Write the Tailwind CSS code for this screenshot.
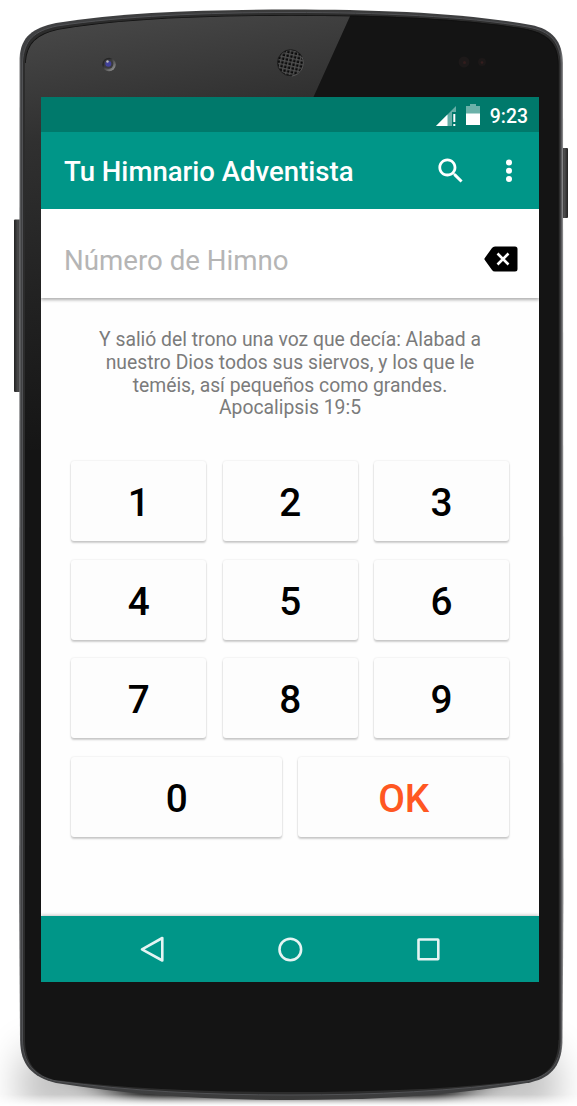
<!DOCTYPE html>
<html lang="es">
<head>
<meta charset="utf-8">
<title>Tu Himnario Adventista</title>
<script src="https://cdn.jsdelivr.net/npm/@tailwindcss/browser@4"></script>
</head>
<body class="bg-white overflow-hidden">
<div class="relative isolate w-[577px] h-[1106px] overflow-hidden pt-[97px] pl-[41px] font-[Roboto,sans-serif]">
  <!-- Device body -->
  <svg class="absolute inset-0 -z-10" width="577" height="1106" viewBox="0 0 577 1106" aria-hidden="true">
    <defs>
      <linearGradient id="rim" x1="0" x2="1"><stop offset="0" stop-color="#8a8b8d"/><stop offset=".004" stop-color="#404143"/><stop offset=".5" stop-color="#3b3b3b"/><stop offset=".993" stop-color="#404143"/><stop offset="1" stop-color="#9b9b9d"/></linearGradient>
      <linearGradient id="glare" gradientUnits="userSpaceOnUse" x1="120" y1="20" x2="190" y2="440"><stop offset="0" stop-color="#464646"/><stop offset=".25" stop-color="#303030"/><stop offset=".6" stop-color="#222"/><stop offset="1" stop-color="#141414"/></linearGradient>
      <linearGradient id="key" x1="0" x2="1"><stop offset="0" stop-color="#222"/><stop offset=".5" stop-color="#4b4b4c"/><stop offset="1" stop-color="#222"/></linearGradient>
      <linearGradient id="ring" x1="0" y1="0" x2="1" y2="1"><stop offset=".3" stop-color="#262626"/><stop offset="1" stop-color="#a6a6a6"/></linearGradient>
      <pattern id="mesh" width="3.800" height="3.800" patternUnits="userSpaceOnUse" patternTransform="translate(288.5 62) rotate(12)"><rect width="4" height="4" fill="#505050"/><rect x=".4" y=".4" width="2.500" height="2.500" fill="#0b0b0b"/></pattern>
      <filter id="soft" x="-20%" y="-100%" width="140%" height="300%"><feGaussianBlur stdDeviation="22 4"/></filter>
      <filter id="wide" x="-20%" y="-200%" width="140%" height="500%"><feGaussianBlur stdDeviation="18 22"/></filter>
      <clipPath id="face"><path d="M25 63C26 43 36 34 58 29C120 18 205 15 290 15C375 15 463 18 526 29C549 34 558 44 558.500 64V1040C558 1064 548 1076 527 1080C455 1089 375 1092 290 1092C205 1092 130 1089 56 1080C35 1076 25 1062 25 1039Z"/></clipPath>
      <linearGradient id="fade" x1="0" y1="0" x2="0" y2="1"><stop offset=".91" stop-color="#fff"/><stop offset="1" stop-color="#000"/></linearGradient>
      <mask id="ground" maskUnits="userSpaceOnUse" x="0" y="980" width="577" height="126"><rect y="980" width="577" height="126" fill="url(#fade)"/></mask>
    </defs>
    <g mask="url(#ground)">
      <rect x="20" y="1056" width="537" height="55" fill="#000" opacity=".28" filter="url(#wide)"/>
      <path d="M90 1076H487L450 1101H130Z" fill="#000" opacity=".85" filter="url(#soft)"/>
    </g>
    <rect x="14" y="219.500" width="8" height="172.500" rx="1" fill="url(#key)"/>
    <rect x="561" y="148" width="7" height="70" rx="1" fill="url(#key)"/>
    <path d="M19.500 58C21 36 33 28 56 23C125 12 205 9.500 290 9.500C380 9.500 465 13 531 25C552 29 562.500 41 563 63L563.500 900L562.500 1043C561 1067 550 1079 527 1083C455 1095 375 1100 290 1100C210 1100 130 1095 56 1083C32 1077 20.500 1065 20 1040L19 900Z" fill="url(#rim)"/>
    <path d="M22.500 62C24 40 34 31 57 26C122 16 205 12.500 290 12.500C378 12.500 465 16 528 27C551 31 560.500 43 561 64V1041C560 1065 549 1076 527 1081C455 1091 375 1095 290 1095C205 1095 130 1091 56 1081C34 1076 23 1063 22.500 1040Z" fill="#2c2c2c" stroke="#505154" stroke-width="1"/>
    <g clip-path="url(#face)">
      <rect width="577" height="1106" fill="#141414"/>
      <path d="M24 14H351L313 98V450H24Z" fill="url(#glare)"/>
      <path d="M25 63C26 43 36 34 58 29C120 18 205 15 290 15C375 15 463 18 526 29C549 34 558 44 558.500 64V1040" fill="none" stroke="#111" stroke-width="1.500"/>
    </g>
    <circle cx="109" cy="64.500" r="6.700" fill="url(#ring)"/><circle cx="108.500" cy="64" r="4.800" fill="#3a3a3e"/><circle cx="108.300" cy="63.700" r="3" fill="#42419a"/><circle cx="107.500" cy="61.500" r="1.200" fill="#bbb"/>
    <circle cx="290.500" cy="62.700" r="13" fill="url(#mesh)" stroke="#1b1b1b" stroke-width="1"/>
    <path d="M302 57A13.300 13.300 0 0 1 292 76" fill="none" stroke="#656565" stroke-width=".8"/>
    <circle cx="464" cy="62" r="5.500" fill="#1d1919"/><circle cx="464.500" cy="62.500" r="1.500" fill="#321d1d"/><circle cx="482" cy="62" r="4" fill="#1c1818"/><circle cx="482" cy="62.500" r="1.300" fill="#351e1e"/>
  </svg>

  <main class="flex flex-col w-[498px] h-[885px] bg-[#fefefe]">
    <div class="flex items-center justify-end h-[35px] shrink-0 bg-[#00796b] pr-[11px] text-white">
      <svg class="mr-[10px] mt-[2px]" width="20" height="20" viewBox="0 0 20 20" aria-hidden="true"><path d="M0 20L20 0V6H16V20Z" fill="#fff" opacity=".4"/><path d="M0 20L11.500 8.500V20Z" fill="#fff"/><path d="M17.300 8H19.300V16H17.300ZM17.300 18H19.300V20H17.300Z" fill="#fff"/></svg>
      <svg class="mr-[9.500px]" width="14" height="21" viewBox="0 0 14 21" aria-hidden="true"><path d="M4 0H10V2H14V10H0V2H4Z" fill="#fff" opacity=".42"/><path d="M0 9.500H14V21H0Z" fill="#fff"/></svg>
      <span class="text-[19.400px] leading-none font-medium mt-[4px]">9:23</span>
    </div>
    <header class="flex items-center h-[77px] shrink-0 bg-[#009688] pl-[23px] text-white">
      <h1 class="text-[27.550px] leading-none font-medium whitespace-nowrap mt-[3px] w-[373px]">Tu Himnario Adventista</h1>
      <svg class="shrink-0" width="27" height="27" viewBox="2 2 19.500 19.500" fill="#fff" aria-label="Buscar"><path d="M15.500 14h-.79l-.28-.27C15.410 12.590 16 11.110 16 9.500 16 5.910 13.090 3 9.500 3S3 5.910 3 9.500 5.910 16 9.500 16c1.610 0 3.090-.59 4.230-1.570l.27.28v.79l5 4.990L20.490 19l-4.990-5zm-6 0C7.010 14 5 11.990 5 9.500S7.010 5 9.500 5 14 7.010 14 9.500 11.990 14 9.500 14z"/></svg>
      <svg class="ml-[42px] shrink-0" width="6" height="24" viewBox="0 0 6 24" fill="#fff" aria-label="Más"><circle cx="3" cy="3.500" r="3"/><circle cx="3" cy="11.800" r="3"/><circle cx="3" cy="20" r="3"/></svg>
    </header>
    <div class="relative flex items-center justify-between h-[89px] shrink-0 bg-white pl-[23px] pr-[21px] shadow-[0_2px_3px_#00000050] [clip-path:inset(0_0_-8px_0)]">
      <span class="text-[27.670px] leading-none text-[#b5b5b5] mt-[15px]">Número de Himno</span>
      <svg class="mt-[11px]" width="34" height="26" viewBox="0 0 34 26" aria-label="Borrar"><path d="M11 .5H31Q33.500 .5 33.500 3V23Q33.500 25.500 31 25.500H11Q9 25.500 8 24L.8 14Q0 13 .8 12L8 2Q9 .5 11 .5Z" fill="#000"/><path d="M13.500 7.500L24.500 18.500M24.500 7.500L13.500 18.500" stroke="#fff" stroke-width="2.600"/></svg>
    </div>
    <p class="mt-[31.300px] h-[91px] text-center text-[19.320px] leading-[22.700px] text-[#7b7b7b] whitespace-nowrap">Y salió del trono una voz que decía: Alabad a<br>nuestro Dios todos sus siervos, y los que le<br>teméis, así pequeños como grandes.<br>Apocalipsis 19:5</p>
    <div class="grid grid-cols-6 gap-x-[16.500px] gap-y-[18.700px] mt-[40.700px] ml-[30.400px] mr-[30px] text-[38.740px] leading-none font-medium text-black">
      <button class="col-span-2 h-[80px] rounded-[3px] bg-[#fdfdfd] pt-[4px] shadow-[0_2px_2px_#00000030,0_0_2px_#00000022]">1</button>
      <button class="col-span-2 h-[80px] rounded-[3px] bg-[#fdfdfd] pt-[4px] shadow-[0_2px_2px_#00000030,0_0_2px_#00000022]">2</button>
      <button class="col-span-2 h-[80px] rounded-[3px] bg-[#fdfdfd] pt-[4px] shadow-[0_2px_2px_#00000030,0_0_2px_#00000022]">3</button>
      <button class="col-span-2 h-[80px] rounded-[3px] bg-[#fdfdfd] pt-[5px] shadow-[0_2px_2px_#00000030,0_0_2px_#00000022]">4</button>
      <button class="col-span-2 h-[80px] rounded-[3px] bg-[#fdfdfd] pt-[5px] shadow-[0_2px_2px_#00000030,0_0_2px_#00000022]">5</button>
      <button class="col-span-2 h-[80px] rounded-[3px] bg-[#fdfdfd] pt-[5px] shadow-[0_2px_2px_#00000030,0_0_2px_#00000022]">6</button>
      <button class="col-span-2 h-[80px] rounded-[3px] bg-[#fdfdfd] pt-[4px] shadow-[0_2px_2px_#00000030,0_0_2px_#00000022]">7</button>
      <button class="col-span-2 h-[80px] rounded-[3px] bg-[#fdfdfd] pt-[4px] shadow-[0_2px_2px_#00000030,0_0_2px_#00000022]">8</button>
      <button class="col-span-2 h-[80px] rounded-[3px] bg-[#fdfdfd] pt-[4px] shadow-[0_2px_2px_#00000030,0_0_2px_#00000022]">9</button>
      <button class="col-span-3 h-[80px] rounded-[3px] bg-[#fdfdfd] pt-[4px] shadow-[0_2px_2px_#00000030,0_0_2px_#00000022]">0</button>
      <button class="col-span-3 h-[80px] rounded-[3px] bg-[#fdfdfd] pt-[4px] text-[#ff5722] shadow-[0_2px_2px_#00000030,0_0_2px_#00000022]">OK</button>
    </div>
    <nav class="mt-auto grid grid-cols-3 items-center justify-items-center px-[41.500px] h-[66px] shrink-0 bg-[#009688] shadow-[0_-1px_3px_#00000038] [clip-path:inset(-6px_0_0_0)]">
      <svg width="26" height="28" viewBox="0 0 26 28" fill="none" stroke="#e5f4f3" stroke-width="2.600" stroke-linejoin="round" aria-label="Atrás"><path d="M3 14.300L23.300 3V25.500Z"/></svg>
      <svg width="26" height="28" viewBox="0 0 26 28" fill="none" stroke="#e5f4f3" stroke-width="2.600" aria-label="Inicio"><circle cx="13.300" cy="14.500" r="10.800"/></svg>
      <svg width="26" height="28" viewBox="0 0 26 28" fill="none" stroke="#e5f4f3" stroke-width="2.600" stroke-linejoin="round" aria-label="Recientes"><rect x="3.500" y="4.500" width="19.800" height="19.800" rx=".5"/></svg>
    </nav>
  </main>
</div>
</body>
</html>
